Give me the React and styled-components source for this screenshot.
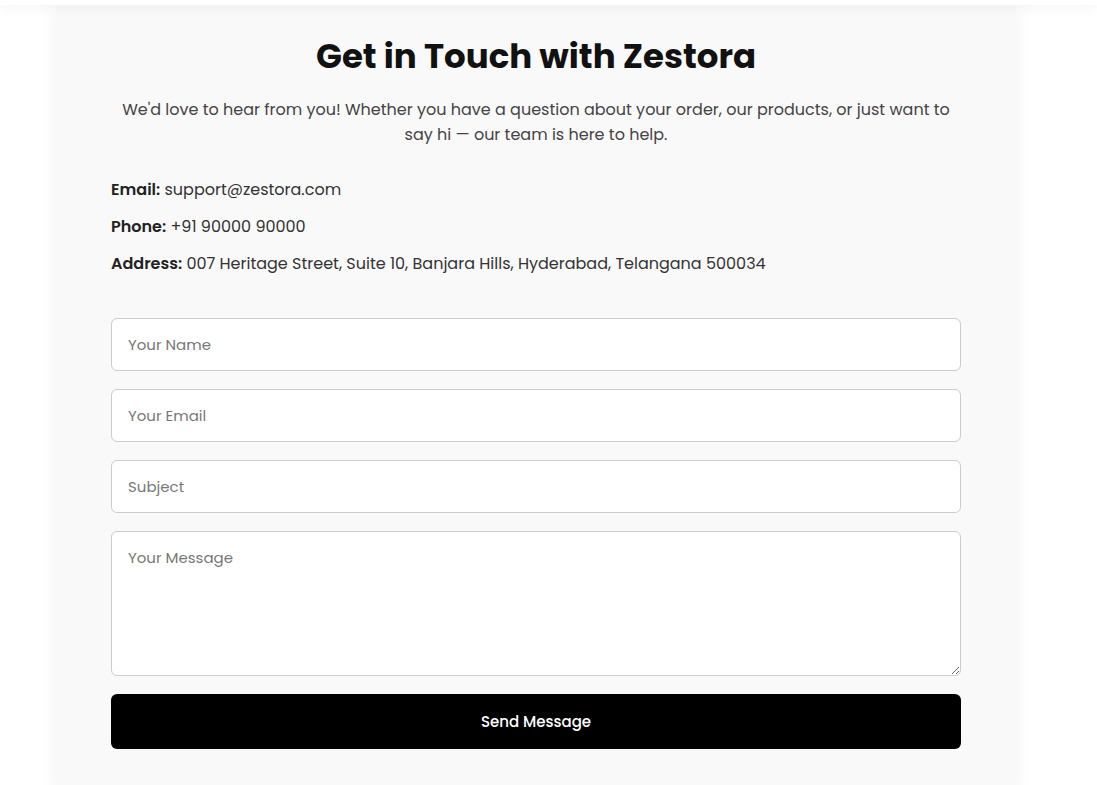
import React from 'react'
import styled, { createGlobalStyle } from 'styled-components'

const GlobalStyle = createGlobalStyle`
    * { box-sizing: border-box; }
    body {
        margin: 0;
        background: #fff;
        font-family: "Poppins", "Inter", "Noto Sans", sans-serif;
    }
`

const TopBar = styled.div`
    height: 5px;
    background: #fff;
    box-shadow: 0 2px 12px rgba(0, 0, 0, 0.08);
    position: relative;
    z-index: 1;
`

const Page = styled.div`
    width: 1072px;
    display: flex;
    justify-content: center;
`

const Card = styled.section`
    width: 960px;
    min-height: 790px;
    background: #f9f9f9;
    box-shadow: 0 0 20px rgba(0, 0, 0, 0.05);
    padding: 29px 55px 36px;
    display: flex;
    flex-direction: column;
`

const Title = styled.h1`
    margin: 0;
    text-align: center;
    font-size: 34px;
    font-weight: 700;
    color: #111;
    line-height: 44px;
`

const Lead = styled.p`
    margin: 19px 0 0;
    text-align: center;
    font-size: 16px;
    line-height: 25px;
    color: #444;
`

const InfoList = styled.div`
    margin-top: 31px;
    display: flex;
    flex-direction: column;
    gap: 13px;
`

const InfoRow = styled.p`
    margin: 0;
    font-size: 16px;
    line-height: 24px;
    color: #333;
    & strong {
        color: #222;
        font-weight: 600;
    }
`

const Form = styled.form`
    margin-top: 42px;
    display: flex;
    flex-direction: column;
    gap: 18px;
`

const Field = styled.input`
    width: 100%;
    height: 53px;
    padding: 0 16px;
    border: 1px solid #ccc;
    border-radius: 6px;
    background: #fff;
    font-family: inherit;
    font-size: 15px;
    color: #333;
    outline: none;
    &::placeholder { color: #777; }
`

const MessageBox = styled.textarea`
    width: 100%;
    height: 145px;
    padding: 15px 16px;
    border: 1px solid #ccc;
    border-radius: 6px;
    background: #fff;
    font-family: inherit;
    font-size: 15px;
    line-height: 22px;
    color: #333;
    outline: none;
    resize: vertical;
    display: block;
    &::placeholder { color: #777; }
`

const SendButton = styled.button`
    height: 55px;
    width: 100%;
    border: none;
    border-radius: 6px;
    background: #000;
    color: #fff;
    font-family: inherit;
    font-size: 15px;
    font-weight: 500;
    cursor: pointer;
`

const App = () => {
    return (
        <>
            <GlobalStyle />
            <TopBar />
            <Page>
                <Card>
                    <Title>Get in Touch with Zestora</Title>
                    <Lead>
                        We'd love to hear from you! Whether you have a question about your order, our products, or just want to say hi — our team is here to help.
                    </Lead>
                    <InfoList>
                        <InfoRow><strong>Email:</strong> support@zestora.com</InfoRow>
                        <InfoRow><strong>Phone:</strong> +91 90000 90000</InfoRow>
                        <InfoRow><strong>Address:</strong> 007 Heritage Street, Suite 10, Banjara Hills, Hyderabad, Telangana 500034</InfoRow>
                    </InfoList>
                    <Form onSubmit={e => e.preventDefault()}>
                        <Field type="text" placeholder="Your Name" />
                        <Field type="email" placeholder="Your Email" />
                        <Field type="text" placeholder="Subject" />
                        <MessageBox placeholder="Your Message" />
                        <SendButton type="submit">Send Message</SendButton>
                    </Form>
                </Card>
            </Page>
        </>
    )
}

export default App
